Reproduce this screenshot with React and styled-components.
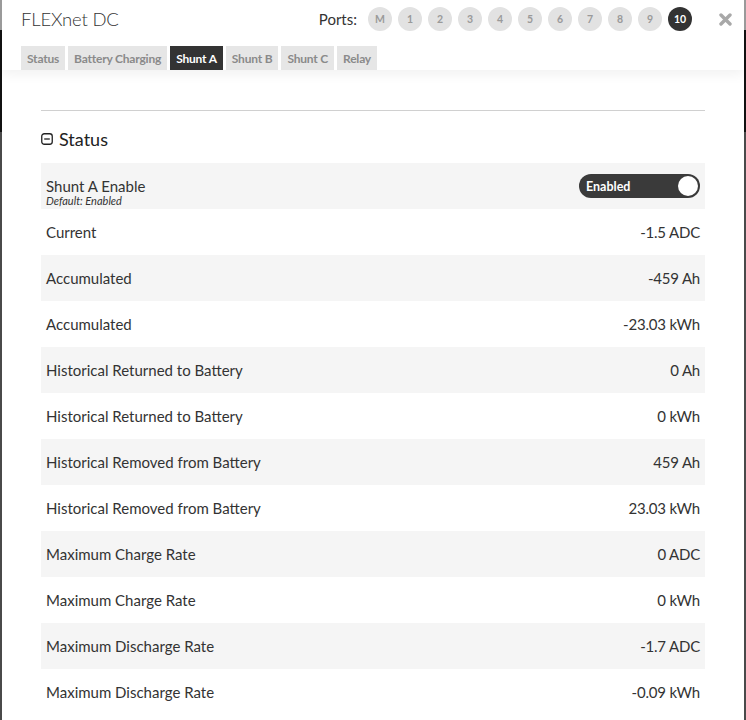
import React from "react";
import styled, { createGlobalStyle } from "styled-components";

const Global = createGlobalStyle`
  html, body { margin: 0; padding: 0; }
  body {
    background: linear-gradient(to bottom, #9a9a9a 0 30px, #111 30px 132px, #4a4a4a 132px);
    font-family: Lato, "Noto Sans", sans-serif;
    color: #333;
  }
`;

const Dialog = styled.div`
  width: 742px;
  height: 720px;
  margin: 0 2px;
  background: #fff;
  overflow: hidden;
  display: flex;
  flex-direction: column;
`;

const Header = styled.header`
  height: 70px;
  display: flex;
  flex-direction: column;
  padding: 0 0 0 17px;
  box-shadow: 0 4px 12px rgba(0, 0, 0, 0.06);
  position: relative;
  z-index: 1;
`;

const TopRow = styled.div`
  height: 46px;
  display: flex;
  align-items: center;
  padding-bottom: 8px;
  box-sizing: border-box;
`;

const Title = styled.h1`
  margin: 0;
  font-size: 18.5px;
  font-weight: 300;
  color: #333;
  padding-left: 2px;
  flex: 1;
  letter-spacing: -0.2px;
`;

const Ports = styled.div`
  display: flex;
  align-items: center;
  gap: 6px;
`;

const PortsLabel = styled.span`
  font-size: 15px;
  margin-right: 5px;
  color: #333;
`;

const Port = styled.span`
  width: 24px;
  height: 24px;
  border-radius: 50%;
  display: flex;
  align-items: center;
  justify-content: center;
  font-size: 10.5px;
  font-weight: 700;
  background: ${(p) => (p.$active ? "#333" : "#e2e2e2")};
  color: ${(p) => (p.$active ? "#fff" : "#9a9a9a")};
`;

const Close = styled.button`
  border: 0;
  background: none;
  padding: 0;
  margin: 0 12px 0 27px;
  width: 13px;
  height: 13px;
  display: flex;
  cursor: pointer;
`;

const Tabs = styled.nav`
  display: flex;
  gap: 3px;
  height: 24px;
  padding-left: 2px;
`;

const Tab = styled.span`
  display: flex;
  align-items: center;
  padding: 0 6px;
  font-size: 12px;
  font-weight: 700;
  letter-spacing: -0.2px;
  background: ${(p) => (p.$active ? "#333" : "#e6e6e6")};
  color: ${(p) => (p.$active ? "#fff" : "#8a8a8a")};
`;

const Body = styled.main`
  padding: 40px 39px 0 39px;
`;

const Rule = styled.hr`
  margin: 0;
  border: 0;
  border-top: 1px solid #d0d0d0;
`;

const SectionTitle = styled.h2`
  margin: 0;
  height: 52px;
  display: flex;
  align-items: center;
  gap: 6px;
  font-size: 18px;
  font-weight: 400;
  color: #222;
  padding-top: 4px;
  box-sizing: border-box;
`;

const List = styled.div`
  display: flex;
  flex-direction: column;
`;

const Row = styled.div`
  height: 46px;
  display: flex;
  align-items: center;
  justify-content: space-between;
  padding: 0 5px;
  background: ${(p) => (p.$shade ? "#f5f5f5" : "#fff")};
  font-size: 15px;
  color: #333;
`;

const LabelBox = styled.div`
  display: flex;
  flex-direction: column;
  padding-top: 12px;
  line-height: 18px;
`;

const Sub = styled.span`
  font-size: 11px;
  line-height: 12px;
  font-style: italic;
  color: #333;
`;

const Value = styled.span`
  letter-spacing: -0.2px;
`;

const Toggle = styled.div`
  width: 121px;
  height: 24px;
  border-radius: 12px;
  background: #3a3a3a;
  display: flex;
  align-items: center;
  justify-content: space-between;
  padding: 0 2px 0 7px;
  box-sizing: border-box;
  color: #fff;
  font-size: 12.5px;
  font-weight: 700;
`;

const Knob = styled.span`
  width: 20px;
  height: 20px;
  border-radius: 50%;
  background: #fff;
`;

const ports = ["M", "1", "2", "3", "4", "5", "6", "7", "8", "9", "10"];
const tabs = ["Status", "Battery Charging", "Shunt A", "Shunt B", "Shunt C", "Relay"];
const rows = [
  ["Current", "-1.5 ADC"],
  ["Accumulated", "-459 Ah"],
  ["Accumulated", "-23.03 kWh"],
  ["Historical Returned to Battery", "0 Ah"],
  ["Historical Returned to Battery", "0 kWh"],
  ["Historical Removed from Battery", "459 Ah"],
  ["Historical Removed from Battery", "23.03 kWh"],
  ["Maximum Charge Rate", "0 ADC"],
  ["Maximum Charge Rate", "0 kWh"],
  ["Maximum Discharge Rate", "-1.7 ADC"],
  ["Maximum Discharge Rate", "-0.09 kWh"],
];

export default function App() {
  return (
    <>
      <Global />
      <Dialog>
        <Header>
          <TopRow>
            <Title>FLEXnet DC</Title>
            <Ports>
              <PortsLabel>Ports:</PortsLabel>
              {ports.map((p) => (
                <Port key={p} $active={p === "10"}>
                  {p}
                </Port>
              ))}
            </Ports>
            <Close aria-label="close">
              <svg width="13" height="13" viewBox="0 0 13 13">
                <path d="M2 2 L11 11 M11 2 L2 11" stroke="#a8a8a8" strokeWidth="3.4" strokeLinecap="round" />
              </svg>
            </Close>
          </TopRow>
          <Tabs>
            {tabs.map((t) => (
              <Tab key={t} $active={t === "Shunt A"}>
                {t}
              </Tab>
            ))}
          </Tabs>
        </Header>
        <Body>
          <Rule />
          <SectionTitle>
            <svg width="12" height="12" viewBox="0 0 12 12">
              <rect x="0.75" y="0.75" width="10.5" height="10.5" rx="2.5" fill="none" stroke="#222" strokeWidth="1.3" />
              <path d="M3.2 6 H8.8" stroke="#222" strokeWidth="1.3" />
            </svg>
            Status
          </SectionTitle>
          <List>
            <Row $shade>
              <LabelBox>
                <span>Shunt A Enable</span>
                <Sub>Default: Enabled</Sub>
              </LabelBox>
              <Toggle>
                Enabled
                <Knob />
              </Toggle>
            </Row>
            {rows.map(([l, v], i) => (
              <Row key={i} $shade={i % 2 === 1}>
                <span>{l}</span>
                <Value>{v}</Value>
              </Row>
            ))}
          </List>
        </Body>
      </Dialog>
    </>
  );
}
